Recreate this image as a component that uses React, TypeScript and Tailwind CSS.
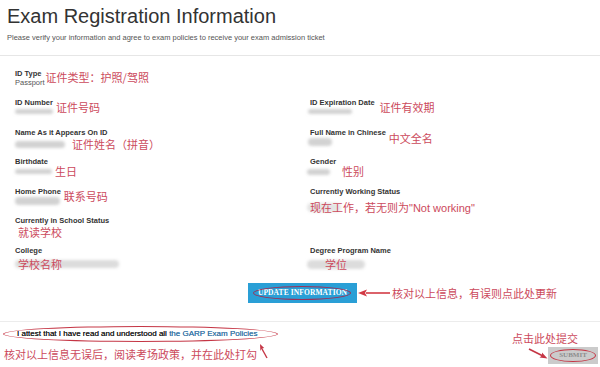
import React from "react";

const NOTE = "relative text-[11px] leading-[11px] text-[#cc4a5c] font-['Noto_Sans_CJK_SC',sans-serif] whitespace-nowrap";

function Label({ children }: { children: React.ReactNode }) {
  return <div className="text-[7.5px] leading-[9px] font-bold text-[#333] whitespace-nowrap">{children}</div>;
}

function Blur({ className }: { className: string }) {
  return <span className={`inline-block shrink-0 rounded-full bg-[#d2d2d2] blur-[1.5px] ${className}`} />;
}

function Row({ children }: { children: React.ReactNode }) {
  return <div className="grid h-[29.5px] grid-cols-[295px_1fr] items-start">{children}</div>;
}

export default function App() {
  return (
    <div className="flex h-[367px] w-[600px] flex-col overflow-hidden bg-white font-['Liberation_Sans',Arial,sans-serif]">
      {/* header */}
      <div className="border-b border-[#e6e6e6] pb-[12px] pl-[7px] pt-[4px]">
        <h1 className="text-[20px] leading-[24px] text-[#333]">Exam Registration Information</h1>
        <p className="mt-[5px] text-[7.5px] leading-[10px] text-[#555]">
          Please verify your information and agree to exam policies to receive your exam admission ticket
        </p>
      </div>

      {/* fields */}
      <div className="pl-[15px] pt-[12.5px]">
        <Row>
          <div className="flex items-center gap-[1px]">
            <div>
              <Label>ID Type</Label>
              <div className="text-[7.5px] leading-[9px] text-[#555]">Passport</div>
            </div>
            <span className={NOTE}>证件类型：护照/驾照</span>
          </div>
          <div />
        </Row>
        <Row>
          <div className="flex items-center gap-[3px]">
            <div>
              <Label>ID Number</Label>
              <div className="flex h-[9px] items-center">
                <Blur className="h-[5px] w-[38px]" />
              </div>
            </div>
            <span className={NOTE}>证件号码</span>
          </div>
          <div className="flex items-center gap-[5px]">
            <div>
              <Label>ID Expiration Date</Label>
              <div className="flex h-[9px] items-center">
                <Blur className="-ml-[2px] h-[5px] w-[44px]" />
              </div>
            </div>
            <span className={NOTE}>证件有效期</span>
          </div>
        </Row>
        <Row>
          <div>
            <Label>Name As it Appears On ID</Label>
            <div className="mt-[2px] flex items-center gap-[7px]">
              <Blur className="h-[7px] w-[50px]" />
              <span className={NOTE}>证件姓名（拼音）</span>
            </div>
          </div>
          <div className="flex items-center gap-[3px]">
            <div>
              <Label>Full Name in Chinese</Label>
              <div className="flex h-[11px] items-center">
                <Blur className="-ml-[2px] h-[8px] w-[24px]" />
              </div>
            </div>
            <span className={`${NOTE} mt-[2px]`}>中文全名</span>
          </div>
        </Row>
        <Row>
          <div>
            <Label>Birthdate</Label>
            <div className="flex items-center gap-[3px]">
              <Blur className="h-[5px] w-[37px]" />
              <span className={NOTE}>生日</span>
            </div>
          </div>
          <div>
            <Label>Gender</Label>
            <div className="flex items-center gap-[12px]">
              <Blur className="-ml-[3px] h-[6px] w-[23px]" />
              <span className={NOTE}>性别</span>
            </div>
          </div>
        </Row>
        <Row>
          <div className="flex items-center gap-[3px]">
            <div>
              <Label>Home Phone</Label>
              <div className="flex h-[11px] items-center">
                <Blur className="h-[8px] w-[45px]" />
              </div>
            </div>
            <span className={NOTE}>联系号码</span>
          </div>
          <div>
            <Label>Currently Working Status</Label>
            <div className="mt-[6px] flex items-center">
              <Blur className="-ml-[3px] h-[9px] w-[34px] bg-[#e4e4e4]" />
              <span className={`${NOTE} -ml-[31px]`}>
                现在工作，若无则为<span className="font-['Liberation_Sans',Arial,sans-serif] text-[11px]">"Not working"</span>
              </span>
            </div>
          </div>
        </Row>
        <Row>
          <div>
            <Label>Currently in School Status</Label>
            <div className="mt-[2px] flex pl-[3px]">
              <span className={NOTE}>就读学校</span>
            </div>
          </div>
          <div />
        </Row>
        <Row>
          <div>
            <Label>College</Label>
            <div className="mt-[4px] flex items-center">
              <Blur className="h-[8px] w-[104px] bg-[#dcdcdc]" />
              <span className={`${NOTE} -ml-[101px]`}>学校名称</span>
            </div>
          </div>
          <div>
            <Label>Degree Program Name</Label>
            <div className="mt-[4px] flex items-center">
              <Blur className="-ml-[3px] h-[9px] w-[58px] bg-[#dcdcdc]" />
              <span className={`${NOTE} -ml-[40px]`}>学位</span>
            </div>
          </div>
        </Row>
      </div>

      {/* update button */}
      <div className="mt-[8px] flex items-center pl-[248px]">
        <button className="relative flex h-[20px] w-[109px] items-center justify-center bg-[#2a9fd6] font-['Liberation_Serif',serif] text-[7.5px] font-bold tracking-[0.1px] text-white">
          UPDATE INFORMATION
          <span className="absolute bottom-[3px] left-[5px] right-[6px] top-[3px] rounded-[50%] border-[1.5px] border-[#9b3158]" />
        </button>
        <svg width="34" height="10" viewBox="0 0 34 10" className="shrink-0">
          <path d="M33 5 L9 5" stroke="#d23a45" strokeWidth="1.6" />
          <path d="M1 5 L10 1.5 L8 5 L10 8.5 Z" fill="#d23a45" />
        </svg>
        <span className={`${NOTE} ml-[1px]`}>核对以上信息，有误则点此处更新</span>
      </div>

      {/* footer */}
      <div className="mt-[18px] flex flex-1 items-start justify-between border-t border-[#ececec]">
        <div className="pl-[4px] pt-[7px]">
          <div className="relative ml-[13px] text-[8px] leading-[10px] text-[#222] whitespace-nowrap [text-shadow:0_0_0.4px_#222]">
            I attest that I have read and understood all{" "}
            <span className="text-[#3d78a8] [text-shadow:0_0_0.4px_#3d78a8]">the GARP Exam Policies</span>
            <span className="absolute -bottom-[3px] -left-[14px] -right-[8px] -top-[3px] rounded-[50%] border-[1.5px] border-[#c53645]" />
          </div>
          <div className="mt-[9.5px] flex items-start">
            <span className={NOTE}>核对以上信息无误后，阅读考场政策，并在此处打勾</span>
            <svg width="12" height="16" viewBox="0 0 12 16" className="-mt-[6px] ml-[1px] shrink-0">
              <path d="M9 15 L3.5 5" stroke="#c53645" strokeWidth="1.4" />
              <path d="M2 1 L6.2 5 L3.6 5.6 L2.4 8 Z" fill="#c53645" />
            </svg>
          </div>
        </div>
        <div className="flex flex-col items-end pr-[2px] pt-[10.5px]">
          <span className={`${NOTE} mr-[20px] text-[11.5px] leading-[11.5px]`}>点击此处提交</span>
          <div className="mt-[3px] flex items-center">
            <svg width="20" height="12" viewBox="0 0 20 12" className="-mt-[2px] shrink-0">
              <path d="M1 1 L15 8" stroke="#c53645" strokeWidth="1.6" />
              <path d="M19.5 10.5 L11.5 9.5 L14 7.5 L14 4.5 Z" fill="#c53645" />
            </svg>
            <button className="relative flex h-[17px] w-[50px] items-center justify-center bg-[#cbcbcb] font-['Liberation_Serif',serif] text-[7px] font-bold text-[#8d8d8d]">
              SUBMIT
              <span className="absolute bottom-[2px] left-[2px] right-[2px] top-[2px] rounded-[50%] border-[1.5px] border-[#c53645]" />
            </button>
          </div>
        </div>
      </div>
    </div>
  );
}
